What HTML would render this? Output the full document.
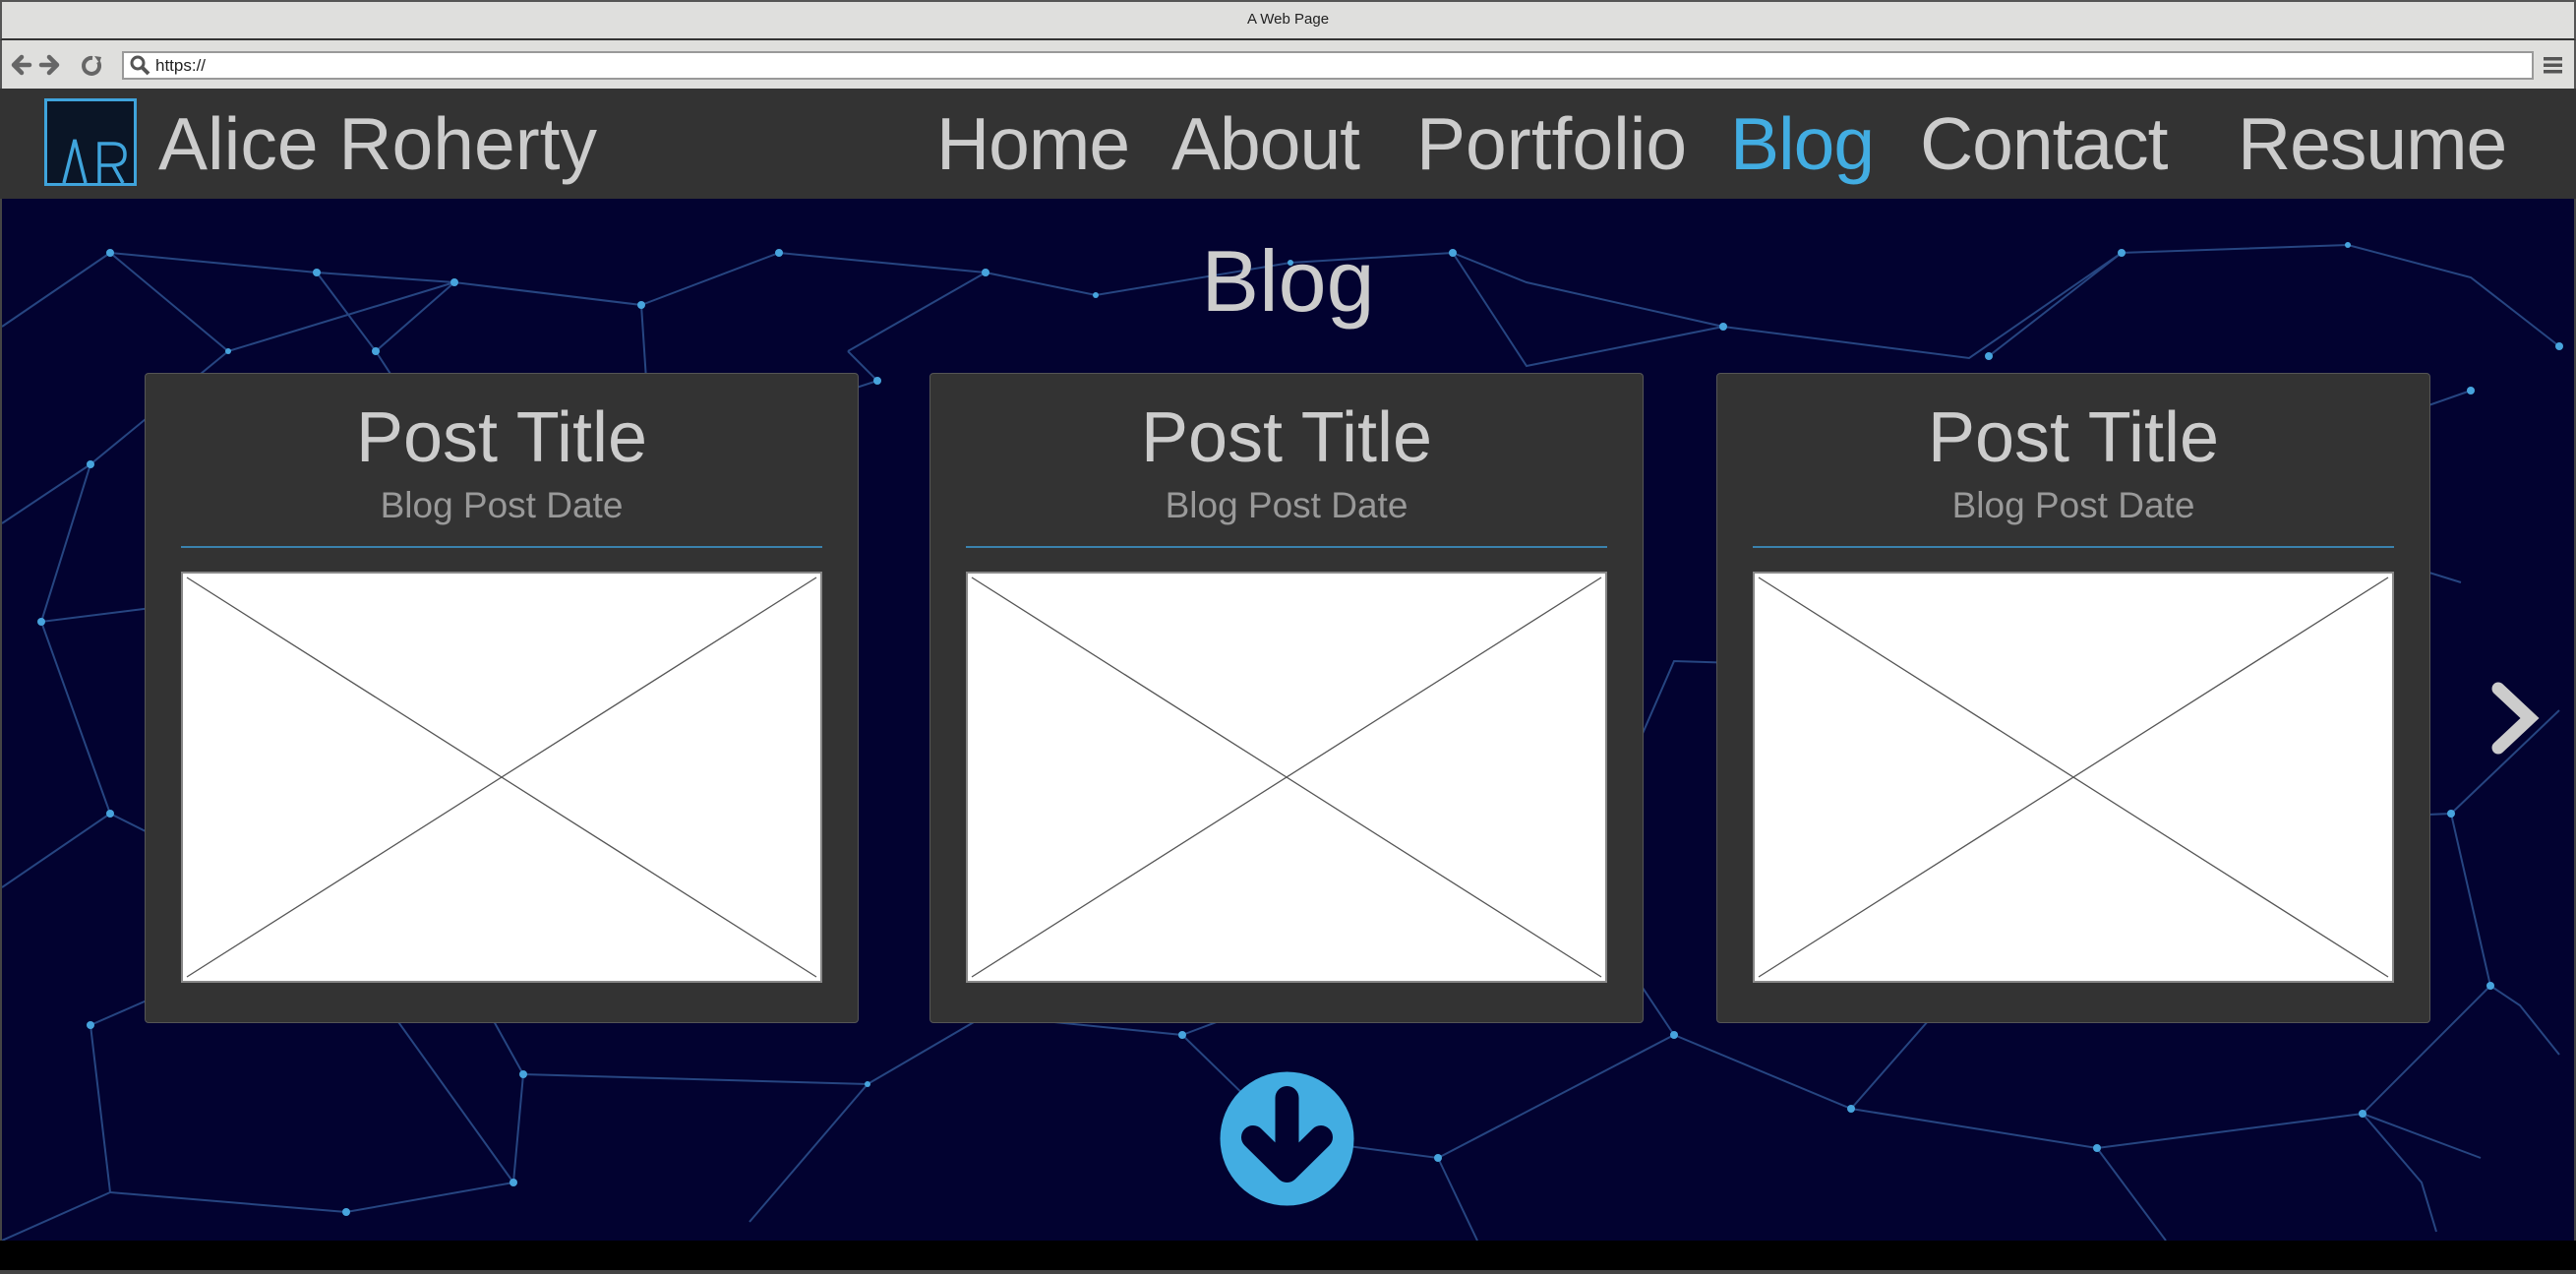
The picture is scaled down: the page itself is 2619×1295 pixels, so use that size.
<!DOCTYPE html>
<html><head><meta charset="utf-8"><style>
*{margin:0;padding:0;box-sizing:border-box}
body{width:2619px;height:1295px;overflow:hidden;background:#000;font-family:"Liberation Sans",sans-serif;position:relative}
.abs{position:absolute}
#title{left:0;top:0;width:2619px;height:41px;background:#dfdfdd;border:2px solid #555;border-bottom:2px solid #333;text-align:center;font-size:15px;line-height:36px;color:#222}
#addr{left:0;top:41px;width:2619px;height:49px;background:#dfdfdd;border-left:2px solid #555;border-right:2px solid #555}
#url{left:124px;top:52px;width:2452px;height:29px;background:#fff;border:2px solid #999}
#nav{left:0;top:90px;width:2619px;height:112px;background:#333}
.n{position:absolute;top:101px;font-size:75px;line-height:90px;color:#ccc;letter-spacing:-1px}
#hero{left:0;top:202px;width:2619px;height:1059px;background:#020230;overflow:hidden;border-left:2px solid #444;border-right:2px solid #444}
.card{position:absolute;top:379px;width:726px;height:661px;background:#333;border:1px solid #555;border-radius:4px}
.card h2{position:absolute;left:0;right:0;top:25px;text-align:center;font-weight:normal;font-size:72px;line-height:80px;color:#ccc}
.card p{position:absolute;left:0;right:0;top:113px;text-align:center;font-size:37px;line-height:42px;color:#999}
.card .ln{position:absolute;left:36px;width:652px;top:175px;height:2px;background:#3a82ad}
.card svg{position:absolute;left:36px;top:201px}
</style></head><body>
<div id="title" class="abs">A Web Page</div>
<div id="addr" class="abs">
<svg class="abs" style="left:8px;top:12px" width="100" height="26" viewBox="0 0 100 26"><path d="M4 13 L12 5 M4 13 L12 21 M4 13 H20" stroke="#666" stroke-width="4.5" fill="none" stroke-linecap="round"/><path d="M48 13 L40 5 M48 13 L40 21 M48 13 H32" stroke="#666" stroke-width="4.5" fill="none" stroke-linecap="round"/><path d="M84 6 A8 8 0 1 0 90 10" stroke="#666" stroke-width="4" fill="none"/><path d="M86 4 L93 5 L91 11 Z" fill="#666"/></svg>
</div>
<div id="url" class="abs"><svg class="abs" style="left:6px;top:2px" width="22" height="22" viewBox="0 0 22 22"><circle cx="8" cy="8" r="6" stroke="#555" stroke-width="3" fill="none"/><path d="M12 12 L19 19" stroke="#555" stroke-width="4"/></svg><span class="abs" style="left:32px;top:3px;font-size:17px;color:#222">https://</span></div>
<svg class="abs" style="left:2585px;top:55px" width="22" height="22"><rect x="1" y="3" width="19" height="3.5" fill="#555"/><rect x="1" y="9.5" width="19" height="3.5" fill="#555"/><rect x="1" y="16" width="19" height="3.5" fill="#555"/></svg>
<div id="nav" class="abs"></div>
<svg class="abs" style="left:45px;top:100px" width="94" height="89"><rect x="1.5" y="1.5" width="91" height="86" fill="#0a1526" stroke="#3fa4dc" stroke-width="3"/><path d="M20 86 L31 42 L42 86 M56 86 V46 H70 Q82 46 82 57 Q82 68 70 68 H56 M70 68 L80 86" stroke="#3fa4dc" stroke-width="3.5" fill="none"/></svg>
<div class="n" style="left:161px;color:#ccc;letter-spacing:0">Alice Roherty</div>
<div class="n" style="left:952px">Home</div>
<div class="n" style="left:1191px">About</div>
<div class="n" style="left:1440px;letter-spacing:0">Portfolio</div>
<div class="n" style="left:1759px;color:#42ade2">Blog</div>
<div class="n" style="left:1952px">Contact</div>
<div class="n" style="left:2275px">Resume</div>
<div id="hero" class="abs">
<svg width="2619" height="1059" style="position:absolute;left:0;top:0" stroke="#2a4d8a" stroke-width="2" fill="#4fb6f0" opacity="0.9">
<g fill="none">
<path d="M110 55 L320 75 L460 85 L230 155 L110 55 M110 55 L0 130 M320 75 L380 155 L460 85 L650 108 L790 55 L1000 75 L1112 98 L1310 65 L1475 55 L1550 85 L1750 130 L2000 162 L2155 55 L2385 47 L2510 80 L2600 150 M2155 55 L2020 160 M1475 55 L1550 170 L1750 130 M1000 75 L860 155 M650 108 L660 260 L520 370 L380 155 M660 260 L890 185 L860 155 M520 370 L40 430 L90 270 L230 155 M90 270 L0 330 M40 430 L110 625 L0 700 M110 625 L330 735 L380 620 M330 735 L90 840 L110 1010 L350 1030 L520 1000 L530 890 L380 620 M530 890 L880 900 L1000 830 L1200 850 L1308 955 L1460 975 L1700 850 L1880 925 L2130 965 L2400 930 L2520 975 M1700 850 L1600 700 L1700 470 L2020 480 L2210 300 L2510 195 M2020 480 L2130 640 L2490 625 L2600 520 M2130 640 L1880 925 M1600 700 L1200 850 M2490 625 L2530 800 L2400 930 M2530 800 L2560 820 L2600 870 M2210 300 L2500 390 M1000 830 L880 900 M760 1040 L880 900 M1460 975 L1500 1059 M2130 965 L2200 1059 M330 735 L520 1000 M2400 930 L2460 1000 L2475 1050 M110 1010 L0 1059"/>
</g>
<g stroke="none">
<circle cx="110" cy="55" r="4"/><circle cx="320" cy="75" r="4"/><circle cx="460" cy="85" r="4"/><circle cx="230" cy="155" r="3"/><circle cx="380" cy="155" r="4"/><circle cx="650" cy="108" r="4"/><circle cx="790" cy="55" r="4"/><circle cx="1000" cy="75" r="4"/><circle cx="1112" cy="98" r="3"/><circle cx="1310" cy="65" r="3"/><circle cx="1475" cy="55" r="4"/><circle cx="1750" cy="130" r="4"/><circle cx="2020" cy="160" r="4"/><circle cx="2155" cy="55" r="4"/><circle cx="2385" cy="47" r="3"/><circle cx="2510" cy="195" r="4"/><circle cx="2600" cy="150" r="4"/><circle cx="660" cy="260" r="3"/><circle cx="890" cy="185" r="4"/><circle cx="90" cy="270" r="4"/><circle cx="40" cy="430" r="4"/><circle cx="110" cy="625" r="4"/><circle cx="90" cy="840" r="4"/><circle cx="330" cy="735" r="4"/><circle cx="520" cy="1000" r="4"/><circle cx="530" cy="890" r="4"/><circle cx="880" cy="900" r="3"/><circle cx="1000" cy="830" r="4"/><circle cx="1200" cy="850" r="4"/><circle cx="1460" cy="975" r="4"/><circle cx="1700" cy="850" r="4"/><circle cx="1880" cy="925" r="4"/><circle cx="2130" cy="965" r="4"/><circle cx="2400" cy="930" r="4"/><circle cx="2490" cy="625" r="4"/><circle cx="2530" cy="800" r="4"/><circle cx="350" cy="1030" r="4"/><circle cx="1600" cy="700" r="3"/>
</g>
</svg>
<div class="abs" style="left:0;right:0;top:29px;text-align:center;font-size:88px;line-height:110px;color:#ccc">Blog</div>
</div>
<div class="card" style="left:147px"><h2>Post Title</h2><p>Blog Post Date</p><div class="ln"></div><svg width="652" height="418"><rect x="1" y="1" width="650" height="416" fill="#fff" stroke="#888" stroke-width="2"/><path d="M6 6 L646 412 M646 6 L6 412" stroke="#555" stroke-width="1.3"/></svg></div>
<div class="card" style="left:945px"><h2>Post Title</h2><p>Blog Post Date</p><div class="ln"></div><svg width="652" height="418"><rect x="1" y="1" width="650" height="416" fill="#fff" stroke="#888" stroke-width="2"/><path d="M6 6 L646 412 M646 6 L6 412" stroke="#555" stroke-width="1.3"/></svg></div>
<div class="card" style="left:1745px"><h2>Post Title</h2><p>Blog Post Date</p><div class="ln"></div><svg width="652" height="418"><rect x="1" y="1" width="650" height="416" fill="#fff" stroke="#888" stroke-width="2"/><path d="M6 6 L646 412 M646 6 L6 412" stroke="#555" stroke-width="1.3"/></svg></div>
<svg class="abs" style="left:2530px;top:690px" width="60" height="80"><path d="M10 10 L42 40 L10 70" stroke="#ccc" stroke-width="13" fill="none" stroke-linecap="round" stroke-linejoin="miter"/></svg>
<svg class="abs" style="left:1240px;top:1089px" width="137" height="137" viewBox="0 0 137 137"><circle cx="68.5" cy="68.5" r="68" fill="#42ade2"/><path d="M68.5 27 V100 M34 67 L68.5 101 L103 67" stroke="#020230" stroke-width="24" fill="none" stroke-linecap="round" stroke-linejoin="round"/></svg>
<div class="abs" style="left:0;top:1291px;width:2619px;height:4px;background:#444"></div>
</body></html>
